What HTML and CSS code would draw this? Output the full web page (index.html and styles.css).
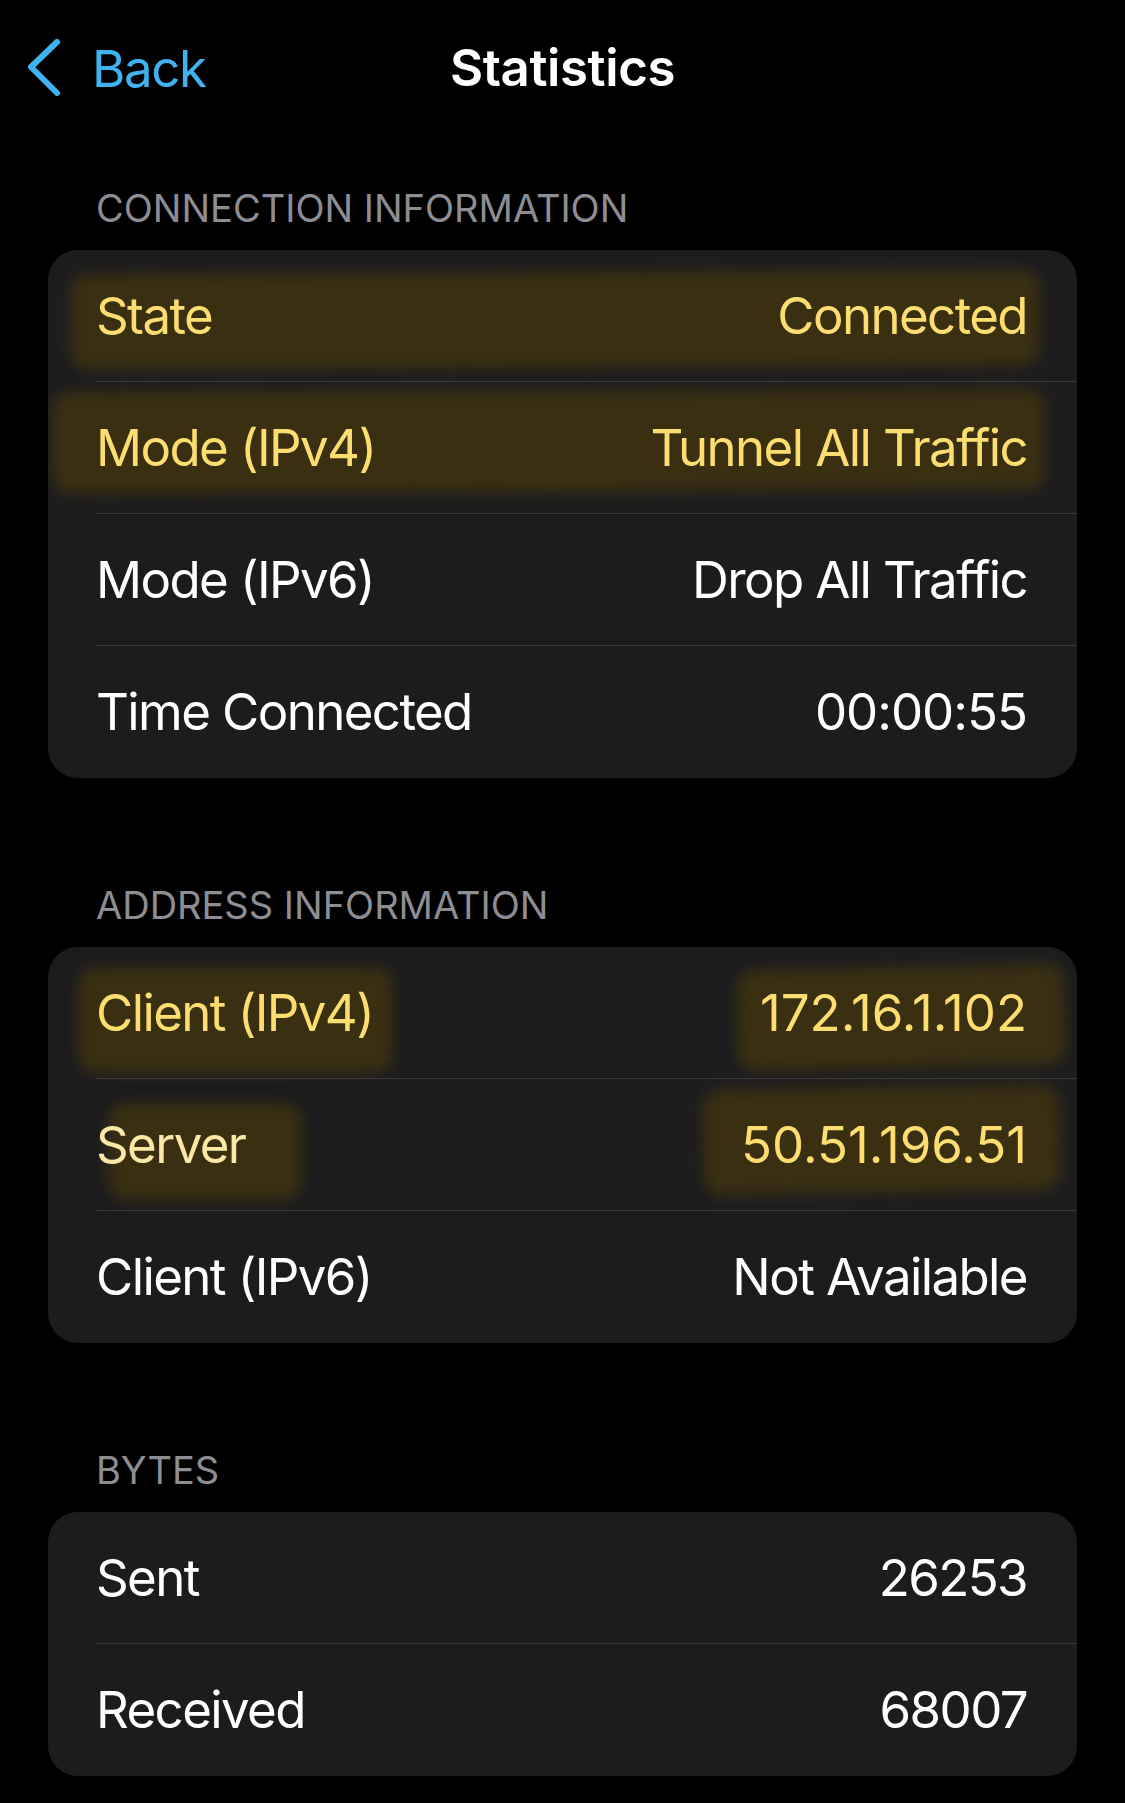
FILE: index.html
```html
<!DOCTYPE html>
<html lang="en">
<head>
  <meta charset="UTF-8">
  <title>Statistics</title>
  <link rel="stylesheet" href="styles.css">
</head>
<body>
  <div class="nav">
    <a class="back" href="#">
      <svg class="chevron" width="40" height="60" viewBox="0 0 40 60">
        <path d="M29 3 L3 28 L29 54" fill="none" stroke="#3fb2ef" stroke-width="6" stroke-linecap="round" stroke-linejoin="round"/>
      </svg>
      <span>Back</span>
    </a>
    <div class="title">Statistics</div>
  </div>

  <div class="section first">
    <div class="section-title">CONNECTION INFORMATION</div>
    <div class="card">
      <div class="mark m1"></div>
      <div class="mark m2"></div>
      <div class="row"><div class="row-inner"><span class="hl">State</span><span class="hl">Connected</span></div></div>
      <div class="row"><div class="row-inner"><span class="hl">Mode (IPv4)</span><span class="hl">Tunnel All Traffic</span></div></div>
      <div class="row"><div class="row-inner"><span>Mode (IPv6)</span><span>Drop All Traffic</span></div></div>
      <div class="row"><div class="row-inner"><span>Time Connected</span><span class="num">00:00:55</span></div></div>
    </div>
  </div>

  <div class="section">
    <div class="section-title">ADDRESS INFORMATION</div>
    <div class="card">
      <div class="mark m3"></div>
      <div class="mark m4"></div>
      <div class="mark m5"></div>
      <div class="mark m6"></div>
      <div class="row"><div class="row-inner"><span class="hl">Client (IPv4)</span><span class="ip hl">172.16.1.102</span></div></div>
      <div class="row"><div class="row-inner"><span class="hl-soft">Server</span><span class="ip hl">50.51.196.51</span></div></div>
      <div class="row"><div class="row-inner"><span>Client (IPv6)</span><span>Not Available</span></div></div>
    </div>
  </div>

  <div class="section">
    <div class="section-title">BYTES</div>
    <div class="card">
      <div class="row"><div class="row-inner"><span>Sent</span><span>26253</span></div></div>
      <div class="row"><div class="row-inner"><span>Received</span><span>68007</span></div></div>
    </div>
  </div>
</body>
</html>
```

FILE: styles.css
```css
body { margin: 0; background: #000; color: #fff; font-family: Inter, "Noto Sans", sans-serif; }

.nav { height: 137px; display: flex; align-items: center; position: relative; padding-left: 28px; }
.back { display: flex; align-items: center; color: #3fb2ef; text-decoration: none; font-size: 51px; line-height: 60px; letter-spacing: -1.4px; }
.chevron { margin-right: 24px; margin-top: 1px; }
.title { position: absolute; left: 0; right: 0; text-align: center; font-size: 51px; line-height: 60px; font-weight: 600; letter-spacing: -0.4px; pointer-events: none; margin-top: -1px; }

.section { margin-top: 104px; }
.section.first { margin-top: 48px; }
.section-title { padding-left: 96px; font-size: 38px; line-height: 46px; color: #8d8d93; margin-bottom: 19px; letter-spacing: 0; }

.card { margin: 0 48px; background: #1c1c1e; border-radius: 30px; overflow: hidden; position: relative; z-index: 0; }
.row { padding-left: 48px; }
.row-inner { height: 132px; box-sizing: border-box; padding-right: 50px; display: flex; align-items: center; justify-content: space-between; border-bottom: 1px solid #3a3a3d; font-size: 51px; line-height: 60px; letter-spacing: -1.6px; }
.row:last-child .row-inner { border-bottom: none; }
.num { letter-spacing: -1px; }
.ip { letter-spacing: 0; }

.hl { color: #fcdd70; }
.hl-soft { color: #fbe8a6; }

/* highlighter marks */
.mark { position: absolute; z-index: -1; background: #3a2f11; filter: blur(7px); border-radius: 18px; }
.m1 { left: 22px; top: 22px; width: 970px; height: 96px; transform: rotate(-0.3deg); }
.m2 { left: 4px; top: 140px; width: 993px; height: 102px; transform: rotate(-0.2deg); }
.m3 { left: 30px; top: 20px; width: 315px; height: 106px; }
.m4 { left: 689px; top: 20px; width: 328px; height: 101px; transform: rotate(-1.2deg); }
.m5 { left: 60px; top: 156px; width: 194px; height: 97px; }
.m6 { left: 655px; top: 140px; width: 357px; height: 106px; transform: rotate(-1deg); }
```
